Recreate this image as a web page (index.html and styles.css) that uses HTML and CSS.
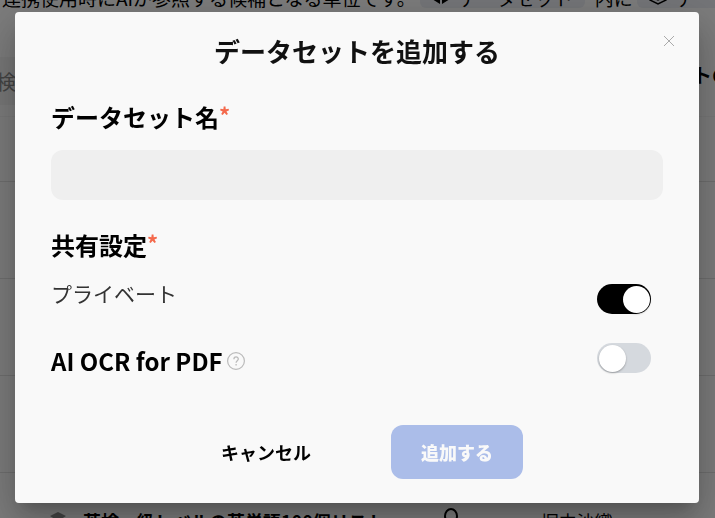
FILE: index.html
```html
<!DOCTYPE html>
<html lang="ja">
<head>
    <meta charset="UTF-8">
    <meta name="viewport" content="width=device-width, initial-scale=1.0">
    <title>データセットを追加する</title>
    <link rel="stylesheet" href="styles.css">
</head>
<body>
<main class="page">
    <p class="intro">
        <span>連携使用時にAIが参照する候補となる単位です。</span>
        <span class="chip">
            <svg width="18" height="20" viewBox="0 0 18 20"><path d="M8 1v16L0 12V5z M10 1v16l8-5V5z" fill="#000"/></svg>
            データセット
        </span>
        <span>内に</span>
        <span class="chip">
            <svg width="18" height="20" viewBox="0 0 18 20"><path d="M9 1l8 4v8l-8 4-8-4V5z M5 11l4 2 4-2" fill="none" stroke="#000" stroke-width="1.500"/></svg>
            データ
        </span>
    </p>
    <div class="toolbar">
        <input class="search" type="text" placeholder="検索" aria-label="検索">
        <span class="toolbar-title">データセットの</span>
    </div>
    <div class="list">
        <div class="list-head"></div>
        <div class="list-row"></div>
        <div class="list-row"></div>
        <div class="list-row"></div>
        <div class="list-row">
            <svg class="layer-icon" width="16" height="20" viewBox="0 0 16 20"><path d="M8 1l8 4-8 5-8-5z M0 9l8 5 8-5v4l-8 5-8-5z" fill="#888"/></svg>
            <span class="row-name">英検一級レベルの英単語100個リスト</span>
            <svg class="user-icon" width="24" height="28" viewBox="0 0 24 28"><ellipse cx="12" cy="9" rx="6" ry="7" fill="none" stroke="#000" stroke-width="2"/><path d="M2 27c0-12 20-12 20 0" fill="none" stroke="#000" stroke-width="2"/></svg>
            <span>堀内沙織</span>
        </div>
    </div>
</main>

<div class="overlay">
    <form class="modal" role="dialog" aria-labelledby="modalTitle">
        <button type="button" class="close" aria-label="閉じる">
            <svg width="12" height="12" viewBox="0 0 12 12"><path d="M1 1l10 10M11 1L1 11" stroke="#aaa" stroke-width="1" fill="none"/></svg>
        </button>
        <h1 id="modalTitle">データセットを追加する</h1>

        <label class="label" for="name">データセット名<span class="required">*</span></label>
        <input class="text-input" type="text" id="name">

        <h2 class="label">共有設定<span class="required">*</span></h2>
        <div class="setting share">
            <label for="private">プライベート</label>
            <input class="switch" type="checkbox" role="switch" id="private" checked>
        </div>
        <div class="setting">
            <div class="ocr">
                <label class="label" for="ocr">AI OCR for PDF</label>
                <svg width="18" height="18" viewBox="0 0 18 18" fill="none" stroke="#bbb"><circle cx="9" cy="9" r="8.400" stroke-width="1.200"/><path d="M6.900 7.200c0-3 4.400-2.900 4.400-.200 0 1.700-2.200 1.700-2.200 3.700M9.100 12v1.500" stroke-width="1.300"/></svg>
            </div>
            <input class="switch" type="checkbox" role="switch" id="ocr">
        </div>

        <div class="actions">
            <button type="button" class="cancel">キャンセル</button>
            <button type="submit" class="submit" disabled>追加する</button>
        </div>
    </form>
</div>
</body>
</html>
```
FILE: styles.css
```css
* {
    margin: 0;
    padding: 0;
    box-sizing: border-box;
}

body {
    height: 100vh;
    overflow: hidden;
    background: #f9f9f9;
    color: #000;
    font-family: "Noto Sans CJK JP", sans-serif;
    font-size: 18px;
}

input,
button {
    border: none;
    font: inherit;
}

/* list behind the modal */
.page {
    height: calc(100vh + 20px);
    margin: -20px 0 0 -20px;
    overflow: hidden;
}

.intro {
    display: flex;
    align-items: center;
    gap: 4px;
    height: 34px;
    padding-left: 22px;
    font-size: 19px;
    white-space: nowrap;
}

.chip {
    display: flex;
    align-items: center;
    gap: 9px;
    height: 22px;
    padding: 0 12px;
    margin-right: 6px;
    border-radius: 6px;
    background: #e8ebf0;
}

.toolbar {
    display: flex;
    height: 103px;
    padding-top: 43px;
    border-bottom: 1px solid #f0f0f0;
    white-space: nowrap;
}

.search {
    flex-shrink: 0;
    width: 400px;
    height: 48px;
    padding: 0 16px;
    background: #efefef;
    font-size: 20px;
}

.search::placeholder {
    color: #888;
}

.toolbar-title {
    margin-left: 212px;
    font-size: 20px;
    line-height: 36px;
    font-weight: bold;
}

.list-head {
    height: 65px;
    border-bottom: 1px solid #ddd;
}

.list-row {
    display: flex;
    align-items: center;
    height: 97px;
    padding-left: 70px;
    border-bottom: 1px solid #ddd;
}

.row-name {
    margin-left: 17px;
    font-weight: bold;
}

.user-icon {
    margin: 0 78px 0 54px;
}

.overlay {
    position: fixed;
    inset: 0;
    display: flex;
    align-items: flex-start;
    padding: 12px 16px 15px 15px;
    background: rgba(0, 0, 0, 0.5);
}

.modal {
    position: relative;
    flex: 1;
    padding: 21px 36px 24px;
    border-radius: 4px;
    background: #f9f9f9;
    box-shadow: 0 11px 15px -7px rgba(0, 0, 0, 0.2),
        0 24px 38px 3px rgba(0, 0, 0, 0.14),
        0 9px 46px 8px rgba(0, 0, 0, 0.12);
}

.close {
    position: absolute;
    top: 17px;
    right: 18px;
    width: 24px;
    height: 24px;
    background: none;
    cursor: pointer;
}

.close svg {
    display: block;
    margin: auto;
}

h1 {
    margin-bottom: 30px;
    color: #111;
    font-size: 26px;
    line-height: 36px;
    text-align: center;
}

.label {
    display: flex;
    font-size: 24px;
    font-weight: bold;
    line-height: 36px;
}

.required {
    color: #f4694c;
    font-size: 22px;
    line-height: 30px;
}

.text-input {
    display: block;
    width: 100%;
    height: 50px;
    margin: 15px 0 27px;
    padding: 0 16px;
    border-radius: 12px;
    background: #efefef;
}

.setting {
    display: flex;
    justify-content: space-between;
    align-items: flex-start;
    padding-right: 12px;
}

.share {
    align-items: flex-end;
    margin: 15px 0 29px;
    color: #333;
    font-size: 21px;
    line-height: 30px;
}

.share label {
    padding-bottom: 6px;
}

.ocr {
    display: flex;
    align-items: center;
    gap: 4px;
}

.switch {
    appearance: none;
    display: flex;
    align-items: center;
    width: 54px;
    height: 30px;
    padding: 0 2px;
    border-radius: 15px;
    background: #d5d9de;
    cursor: pointer;
}

.switch::before {
    content: "";
    width: 27px;
    height: 27px;
    border-radius: 50%;
    background: #fff;
    box-shadow: 0 1px 2px rgba(0, 0, 0, 0.3);
}

.switch:checked {
    justify-content: flex-end;
    padding: 0 1px;
    background: #000;
}

.actions {
    display: flex;
    justify-content: center;
    gap: 50px;
    margin-top: 46px;
}

.actions button {
    height: 54px;
    padding: 0 30px;
    border-radius: 12px;
    font-weight: bold;
    cursor: pointer;
}

.cancel {
    background: none;
    color: #000;
}

.actions .submit {
    background: #abbde9;
    color: #f9f9f9;
    font-weight: 900;
}
```
